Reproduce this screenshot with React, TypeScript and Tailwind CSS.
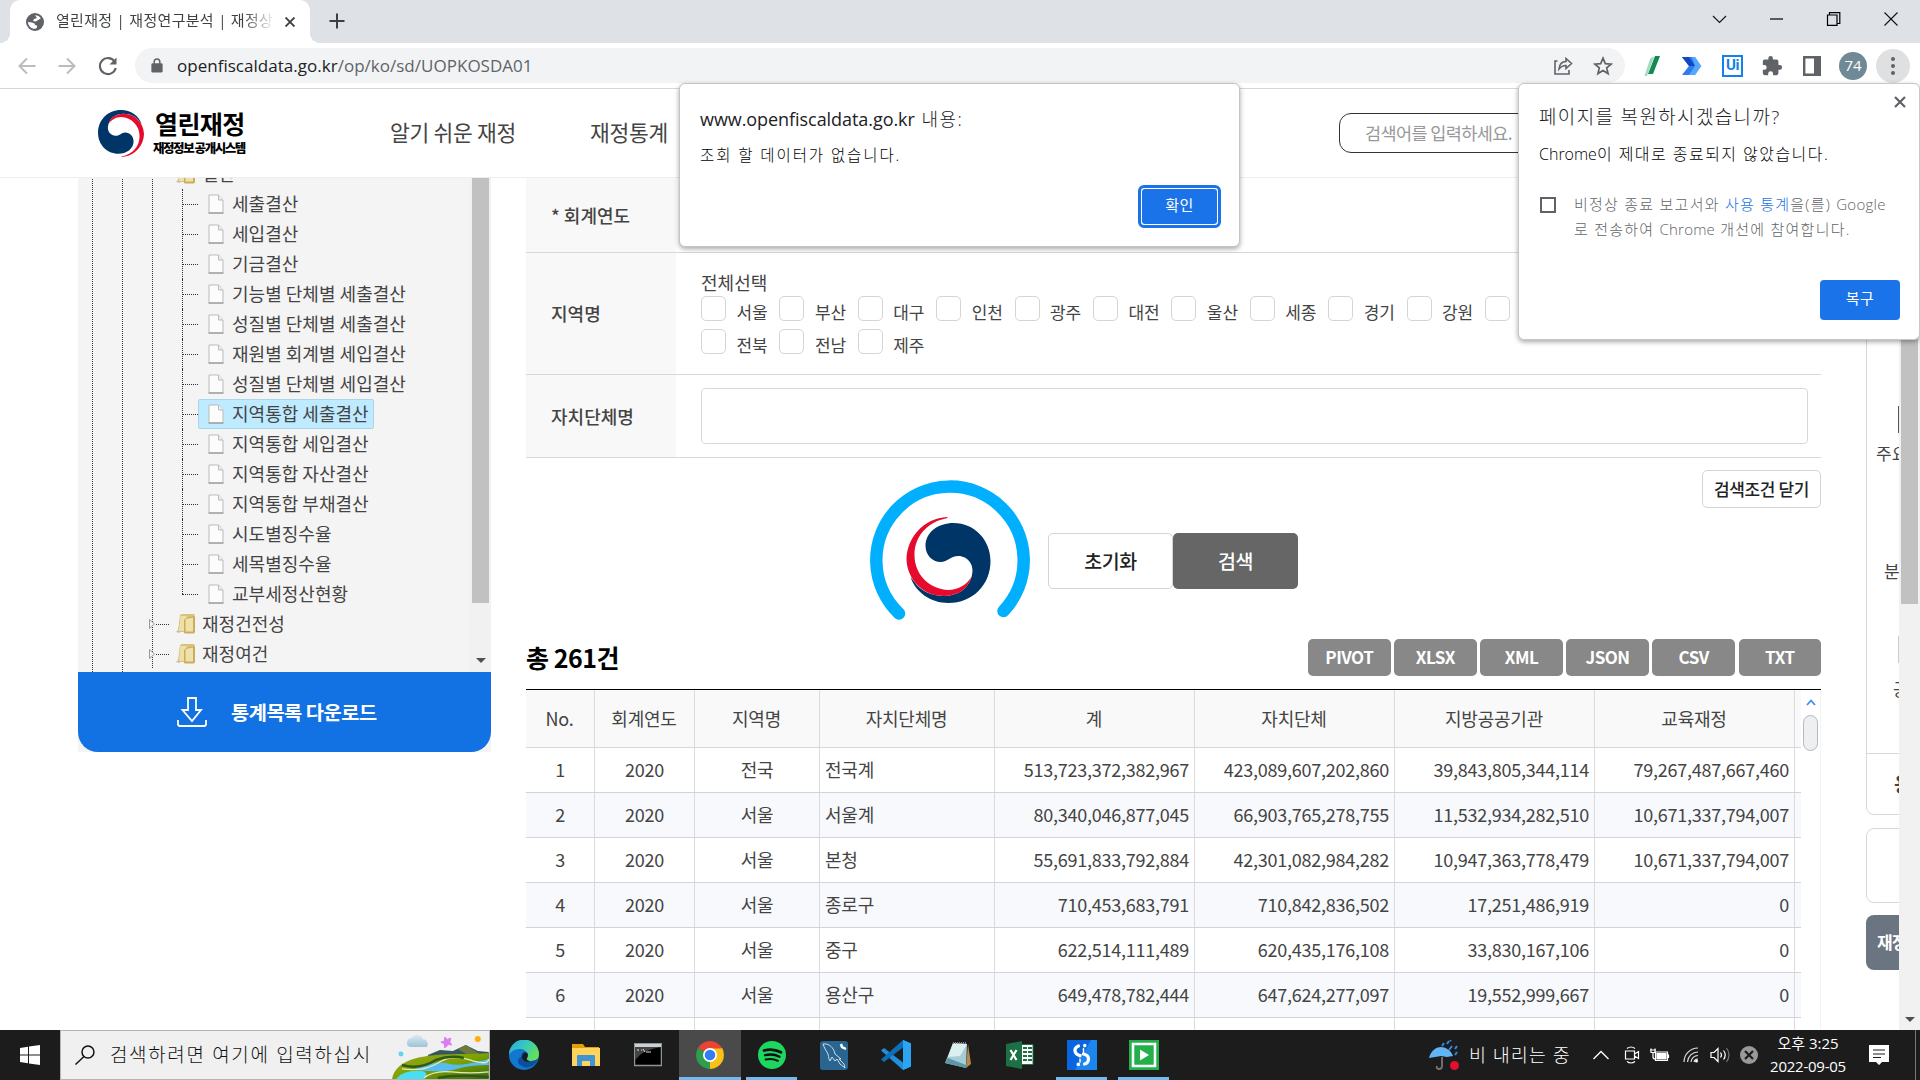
import React from "react";

const UI = "font-['Open_Sans','Noto_Sans_CJK_KR',sans-serif]";
const WEB = "font-['Noto_Sans_CJK_KR',sans-serif]";

function Emblem({ className }: { className: string }) {
  return (
    <svg viewBox="0 0 84 86" className={className}>
      <path fill="#003567" d="M19 29C19 15 32 6 47 6c21 0 37 17 37 38 0 24-18 42-42 42C24 86 9 75 4 60l4 5c6 9 18 14 29 14 15 0 25-8 28-19 4-12-4-21-13-21s-10 6-18 6-15-7-15-16Z" />
      <path fill="#e60a2d" d="M41 0C17 1 0 21 0 43c1 20 17 36 37 36 15 0 25-8 28-19-5 8-14 13-23 13C22 72 8 57 8 38 8 20 20 5 41 1Z" />
    </svg>
  );
}

function Globe() {
  return (
    <svg viewBox="0 0 18 18" className="h-[18px] w-[18px]">
      <circle cx="9" cy="9" r="9" fill="#5f6368" />
      <path fill="#fff" d="M9 2.200c2-.2 4.500 1 5.800 3.200L12 7 10 8.500 7 8l1-2 3-1zM2 9l4 .5 2.500 1L9 12l2 .5v2l-1.500 1.300C5 16 2.200 13 2 9Z" />
    </svg>
  );
}

function TabStrip() {
  return (
    <div className="flex h-[43px] items-stretch bg-[#dee1e6] pl-[10px]">
      <div className="relative flex w-[300px] items-center rounded-t-[10px] bg-white pl-4">
        <Globe />
        <div className="ml-3 w-[219px] overflow-hidden whitespace-nowrap bg-gradient-to-r from-[#3c4043] from-85% to-white bg-clip-text pb-[3px] text-[15px] tracking-[0.3px] text-transparent">
          열린재정 | 재정연구분석 | 재정상
        </div>
        <svg viewBox="0 0 10 10" className="ml-[10px] h-[10px] w-[10px]" stroke="#3c4043" strokeWidth="1.900"><path d="M.5.5l9 9M9.500.5l-9 9" /></svg>
        <span className="absolute -left-[10px] bottom-0 h-[10px] w-[10px] bg-[radial-gradient(circle_at_0_0,#dee1e6_10px,#fff_10px)]" />
        <span className="absolute -right-[10px] bottom-0 h-[10px] w-[10px] bg-[radial-gradient(circle_at_100%_0,#dee1e6_10px,#fff_10px)]" />
      </div>
      <svg viewBox="0 0 16 16" className="ml-[19px] mt-[13px] h-4 w-4" stroke="#3c4043" strokeWidth="2"><path d="M8 .5v15M.5 8h15" /></svg>
      <div className="ml-auto flex h-[37px] items-center">
        <svg viewBox="0 0 14 14" className="h-[14px] w-[57px]" fill="none" stroke="#111" strokeWidth="1.100"><path d="M.5 4L7 10.500 13.500 4" /></svg>
        <svg viewBox="0 0 14 14" className="h-[14px] w-[57px]" fill="none" stroke="#000" strokeWidth="1.200"><path d="M.5 7h13" /></svg>
        <svg viewBox="0 0 14 14" className="h-[14px] w-[57px]" fill="none" stroke="#000" strokeWidth="1.200"><path d="M1 3h9.500v10.400H1zM3 3V.7h10.300V11.500H10.500" /></svg>
        <svg viewBox="0 0 14 14" className="h-[14px] w-[58px]" fill="none" stroke="#111" strokeWidth="1.100"><path d="M.5.5l13 13M13.500.5l-13 13" /></svg>
      </div>
    </div>
  );
}

function Toolbar() {
  return (
    <div className="flex h-[46px] items-center border-b border-[#d4d6d9] bg-white pl-[17px] pr-[10px]">
      <svg viewBox="0 0 20 20" className="h-5 w-5" fill="none" stroke="#babcbe" strokeWidth="2"><path d="M18.500 10H3M10 2.500L2.500 10l7.500 7.500" /></svg>
      <svg viewBox="0 0 20 20" className="ml-5 h-5 w-5" fill="none" stroke="#babcbe" strokeWidth="2"><path d="M1.500 10H17M10 2.500l7.500 7.500-7.500 7.500" /></svg>
      <svg viewBox="0 0 20 20" className="ml-[21px] h-5 w-5" fill="none" stroke="#5f6368" strokeWidth="2.100"><path d="M16.500 5.500A8 8 0 1 0 17.700 12" /><path d="M18.500 1.500v7h-7z" fill="#5f6368" stroke="none" /></svg>
      <div className="ml-[17px] flex h-[35px] w-[1490px] items-center rounded-full bg-[#f1f3f4] pl-4 pr-3">
        <svg viewBox="0 0 12 16" className="h-[15px] w-3"><rect y="5.500" width="12" height="10" rx="1.500" fill="#5f6368" /><path d="M3 6V4a3 3 0 0 1 6 0v2" fill="none" stroke="#5f6368" strokeWidth="1.600" /></svg>
        <div className="ml-[14px] text-[17px] tracking-[0.02px] text-[#5f6368]"><span className="text-[#202124]">openfiscaldata.go.kr</span>/op/ko/sd/UOPKOSDA01</div>
        <svg viewBox="0 0 20 20" className="ml-auto h-5 w-5" fill="none" stroke="#5f6368" strokeWidth="1.600"><path d="M4.500 5H2v13h14v-4M6 13c.5-5 3-7.500 7-7.500V2.500l5.500 5-5.500 5V9.500C10 9.500 8 10.500 6 13Z" /></svg>
        <svg viewBox="0 0 20 20" className="ml-[20px] h-5 w-5" fill="none" stroke="#5f6368" strokeWidth="1.700"><path d="M10 2.200l2.300 5.400 5.900.5-4.500 3.800 1.400 5.700L10 14.500l-5.100 3.100 1.400-5.700L1.800 8.100l5.900-.5z" /></svg>
      </div>
      <svg viewBox="0 0 18 22" className="ml-[19px] h-[22px] w-[18px]"><path d="M11 1h5L9 19H4z" fill="#138a52" /><path d="M8 2h2L3 21H.5L6 4z" fill="#a6d9be" /></svg>
      <svg viewBox="0 0 20 20" className="ml-[20px] h-5 w-5"><path d="M0 1h13l6 9-6 9H0l7-9z" fill="#2f7bf0" /><path d="M0 1h7l6 9H7z" fill="#1247c4" /><path d="M13 1l6.500 9-6.500 9H7l6-9-3-9z" fill="#62b4ff" opacity=".8" /></svg>
      <div className="ml-[20px] flex h-[22px] w-[21px] items-center justify-center border-2 border-[#1281ea] font-['Roboto'] text-[15px] font-bold tracking-tight text-[#1281ea]">Ui</div>
      <svg viewBox="0 0 24 24" className="ml-[18px] h-[22px] w-[22px]" fill="#5f6368"><path d="M20.500 11H19V7a2 2 0 0 0-2-2h-4V3.500a2.500 2.500 0 0 0-5 0V5H4a2 2 0 0 0-2 2v3.800h1.500a2.700 2.700 0 0 1 0 5.400H2V20a2 2 0 0 0 2 2h3.800v-1.500a2.700 2.700 0 0 1 5.400 0V22H17a2 2 0 0 0 2-2v-4h1.500a2.500 2.500 0 0 0 0-5Z" /></svg>
      <svg viewBox="0 0 18 20" className="ml-[20px] h-5 w-[18px]"><path d="M1.200 1.200h15.600v17.600H1.200z" fill="#fff" stroke="#5f6368" strokeWidth="2.400" /><path d="M11 1h6v18h-6z" fill="#5f6368" /></svg>
      <div className="ml-[18px] flex h-7 w-7 items-center justify-center rounded-full bg-[#6f8a96] text-[15px] text-white">74</div>
      <div className="ml-auto flex h-[34px] w-[34px] flex-col items-center justify-center gap-[3px] rounded-full bg-[#dfe0e1]">
        <i className="h-1 w-1 rounded-full bg-[#5f6368]" /><i className="h-1 w-1 rounded-full bg-[#5f6368]" /><i className="h-1 w-1 rounded-full bg-[#5f6368]" />
      </div>
    </div>
  );
}

function SiteHeader() {
  return (
    <div className={`flex h-[89px] shrink-0 items-center border-b border-[#eee] bg-white pl-[97px] ${WEB}`}>
      <Emblem className="h-[47px] w-[48px] rotate-180" />
      <div className="ml-2 flex w-[96px] flex-col text-black">
        <div className="ml-[2px] whitespace-nowrap text-[25px] font-bold leading-[27px] tracking-[-0.6px]">열린재정</div>
        <div className="mt-[3px] whitespace-nowrap text-[12.500px] font-black leading-[16px] tracking-[-1.450px]">재정정보 공개시스템</div>
      </div>
      <div className="ml-[141px] w-[200px] pb-px text-[21.500px] tracking-[-0.3px] text-[#444]">알기 쉬운 재정</div>
      <div className="w-[749px] pb-px text-[21.500px] tracking-[-0.3px] text-[#444]">재정통계</div>
      <div className="flex h-10 w-[300px] items-center rounded-[12px] border border-[#333] pl-[25px] text-[17.500px] tracking-[-0.6px] text-[#999]">검색어를 입력하세요.</div>
    </div>
  );
}

function FileIcon() {
  return (
    <svg viewBox="0 0 16 20" className="h-5 w-4">
      <path d="M1 1h9.500L15 6v13H1z" fill="#fcfcfc" stroke="#bbb" />
      <path d="M10.500 1v5H15" fill="#eee" stroke="#bbb" /><path d="M.5 19h15" stroke="#888" />
    </svg>
  );
}

function FolderIcon() {
  return (
    <svg viewBox="0 0 20 20" className="h-5 w-5">
      <path d="M0 18l4-4v5z" fill="#999" opacity=".6" />
      <path d="M2 16L4 1l2-1h12l1 2v16H2.500z" fill="#d9c27c" /><path d="M4.500 2h6v15H3z" fill="#efe0a8" />
      <path d="M8 6l2-2 8-2 1 1v15l-1 1.500H9q-1 0-1-1z" fill="#c9ad5f" /><path d="M9.500 5L17 3.500v14H9.500z" fill="#f0e1aa" />
    </svg>
  );
}

const VLINE = "w-[30px] self-stretch bg-[linear-gradient(to_bottom,#333_50%,transparent_50%)] bg-[length:1px_2px] bg-repeat-y bg-left";

const leaves = ["세출결산", "세입결산", "기금결산", "기능별 단체별 세출결산", "성질별 단체별 세출결산", "재원별 회계별 세입결산", "성질별 단체별 세입결산", "지역통합 세출결산", "지역통합 세입결산", "지역통합 자산결산", "지역통합 부채결산", "시도별징수율", "세목별징수율", "교부세정산현황"];

function FolderRow({ name, open }: { name: string; open?: boolean }) {
  return (
    <div className="flex h-[30px] shrink-0 items-center pl-[14px]">
      <i className={VLINE} /><i className={VLINE} />
      <span className="flex w-[24px] items-center self-stretch bg-[linear-gradient(to_bottom,#333_50%,transparent_50%)] bg-[length:1px_2px] bg-left bg-repeat-y">
        {!open && <svg viewBox="0 0 20 10" className="-ml-[3px] h-[10px] w-5 shrink-0" fill="#f4f4f4" stroke="#999"><path d="M.5.500l5 4.500-5 4.500z" /><path d="M7 5.500h13" stroke="#333" strokeDasharray="1 1" /></svg>}
      </span>
      <FolderIcon />
      <span className="ml-[6px] pb-[2px]">{name}</span>
    </div>
  );
}

function Sidebar() {
  return (
    <div className={`ml-[78px] flex h-[574px] w-[413px] shrink-0 flex-col bg-[#f4f4f4] ${WEB}`}>
      <div className="flex h-[494px]">
        <div className="flex flex-1 flex-col overflow-hidden whitespace-nowrap text-[18px] tracking-[0.02px] text-[#444]">
          <div className="-mt-[19px] flex shrink-0 flex-col">
            <FolderRow name="결산" open />
            {leaves.map((t, i) => (
              <div key={t} className="flex h-[30px] items-center pl-[14px]">
                <i className={VLINE} /><i className={VLINE} /><i className={VLINE} />
                <span className="flex w-4 flex-col self-stretch">
                  <i className={i === 13 ? "h-[15px] border-l border-dotted border-[#333]" : "h-[30px] border-l border-dotted border-[#333]"} />
                  <i className={i === 13 ? "w-4 border-t border-dotted border-[#333]" : "-mt-[15px] w-4 border-t border-dotted border-[#333]"} />
                </span>
                <span className={i === 7 ? "flex h-[30px] items-center rounded-[2px] border border-[#a9d6e8] bg-[#beebff] pl-[9px] pr-1" : "flex h-[30px] items-center border border-transparent pl-[9px]"}>
                  <FileIcon /><span className="ml-2 pb-[2px]">{t}</span>
                </span>
              </div>
            ))}
            <FolderRow name="재정건전성" /><FolderRow name="재정여건" />
            <div className="flex h-[30px] shrink-0 pl-[14px]"><i className={VLINE} /><i className={VLINE} /></div>
          </div>
        </div>
        <div className="flex w-[21px] flex-col items-center justify-between bg-[#f1f1f1] pb-[9px]">
          <i className="h-[425px] w-[17px] bg-[#c1c1c1]" />
          <i className="h-0 w-0 border-x-[5px] border-t-[5px] border-x-transparent border-t-[#505050]" />
        </div>
      </div>
      <div className="flex h-20 items-center rounded-b-[20px] bg-[#1272e3] pl-[99px] text-white">
        <svg viewBox="0 0 30 30" className="h-[30px] w-[30px]" fill="none" stroke="#fff" strokeWidth="1.800"><path d="M11 1h8v12h5L15 24 5.500 13H11zM1 23v4q0 2 2 2h24q2 0 2-2v-4" /></svg>
        <div className="ml-6 text-[19.800px] font-bold tracking-[-0.5px]">통계목록 다운로드</div>
      </div>
    </div>
  );
}

function Region({ name }: { name: string }) {
  return (
    <div className="flex h-[33px] w-[78.400px] items-start">
      <i className="h-[25px] w-[25px] rounded-[5px] border border-[#d5d5d5] bg-white" />
      <span className="ml-[10.500px] mt-[3px] text-[17px] leading-[25px] tracking-[-0.1px]">{name}</span>
    </div>
  );
}

const LABEL = "flex w-[150px] shrink-0 items-center bg-[#f8f8f8] pl-[25px] font-medium tracking-[0.02px]";

function SearchForm() {
  return (
    <div className="flex flex-col whitespace-nowrap text-[18px] tracking-[0.02px] text-[#444]">
      <div className="flex h-[75px] border-b border-[#d8d8d8]"><div className={LABEL}>* 회계연도</div></div>
      <div className="flex h-[122px] border-b border-[#d8d8d8]">
        <div className={LABEL}>지역명</div>
        <div className="ml-[25px] pt-[16px]">
          <div className="mb-px h-[26px] leading-[26px]">전체선택</div>
          <div className="flex">{["서울", "부산", "대구", "인천", "광주", "대전", "울산", "세종", "경기", "강원", "충북", "충남"].map((r) => <Region key={r} name={r} />)}</div>
          <div className="flex">{["전북", "전남", "제주"].map((r) => <Region key={r} name={r} />)}</div>
        </div>
      </div>
      <div className="flex h-[83px] items-stretch border-b border-[#d8d8d8]">
        <div className={LABEL}>자치단체명</div>
        <div className="ml-[25px] mt-[13px] h-[56px] w-[1107px] rounded border border-[#d8d8d8]" />
      </div>
    </div>
  );
}

const columns = [
  { t: "No.", w: "w-[69px]", a: "justify-center" },
  { t: "회계연도", w: "w-[100px]", a: "justify-center" },
  { t: "지역명", w: "w-[125px]", a: "justify-center" },
  { t: "자치단체명", w: "w-[175px]", a: "justify-start pl-[5px]" },
  { t: "계", w: "w-[200px]", a: "justify-end pr-[5px]" },
  { t: "자치단체", w: "w-[200px]", a: "justify-end pr-[5px]" },
  { t: "지방공공기관", w: "w-[200px]", a: "justify-end pr-[5px]" },
  { t: "교육재정", w: "w-[200px]", a: "justify-end pr-[5px]" },
];
const rows = [
  ["1", "2020", "전국", "전국계", "513,723,372,382,967", "423,089,607,202,860", "39,843,805,344,114", "79,267,487,667,460"],
  ["2", "2020", "서울", "서울계", "80,340,046,877,045", "66,903,765,278,755", "11,532,934,282,510", "10,671,337,794,007"],
  ["3", "2020", "서울", "본청", "55,691,833,792,884", "42,301,082,984,282", "10,947,363,778,479", "10,671,337,794,007"],
  ["4", "2020", "서울", "종로구", "710,453,683,791", "710,842,836,502", "17,251,486,919", "0"],
  ["5", "2020", "서울", "중구", "622,514,111,489", "620,435,176,108", "33,830,167,106", "0"],
  ["6", "2020", "서울", "용산구", "649,478,782,444", "647,624,277,097", "19,552,999,667", "0"],
  ["", "", "", "", "", "", "", ""],
];

function Grid() {
  return (
    <div className="flex h-[341px] shrink-0 overflow-hidden border-t-[1.500px] border-black text-[18px] tracking-[-0.24px] text-[#444]">
      <div className="flex w-[1275px] shrink-0 flex-col">
        <div className="flex h-[58px] shrink-0 border-b border-[#d5d7da] bg-[#f9f9f9]">
          {columns.map((c) => <div key={c.t} className={`flex items-center justify-center border-r border-[#d9dbde] pb-px pr-px ${c.w}`}>{c.t}</div>)}
        </div>
        {rows.map((r, i) => (
          <div key={i} className={`flex h-[45px] shrink-0 border-b border-[#d0d3d8] ${i % 2 ? "bg-[#f7f9fc]" : "bg-white"}`}>
            {r.map((v, j) => <div key={j} className={`flex items-center border-r border-[#d9dbde] pb-[2px] ${columns[j].w} ${columns[j].a}`}>{v}</div>)}
          </div>
        ))}
      </div>
      <div className="flex w-5 flex-col items-center border-r border-[#f4f4f4] pt-[9px]">
        <svg viewBox="0 0 10 7" className="h-[7px] w-[10px]" fill="none" stroke="#3d8ef5" strokeWidth="1.800"><path d="M1 6l4-4.500L9 6" /></svg>
        <i className="mt-[9px] h-9 w-[15px] rounded-full border border-[#b4b7be] bg-[#eeeff1]" />
      </div>
    </div>
  );
}

function Content() {
  return (
    <div className={`ml-[35px] flex w-[1295px] shrink-0 flex-col ${WEB}`}>
      <SearchForm />
      <div className="mt-[12px] flex h-[38px] w-[119px] items-center justify-center self-end rounded-[5px] border border-[#d5d5d5] pb-px text-[17px] font-medium tracking-[-0.4px] text-[#222]">검색조건 닫기</div>
      <div className="-mt-7 ml-[344px] flex h-[143px] items-start">
        <div className="grid h-[160px] w-[160px] place-items-center">
          <svg viewBox="0 0 160 160" className="col-start-1 row-start-1 h-[160px] w-[160px]" fill="none" stroke="#00b0ff" strokeWidth="12.500" strokeLinecap="round"><path d="M29 133.500A73.700 73.700 0 1 1 133.500 131" /></svg>
          <Emblem className="col-start-1 row-start-1 mr-[3px] h-[86px] w-[85px]" />
        </div>
        <div className="ml-[18px] mt-[53px] flex text-[19.500px] font-medium tracking-[-0.4px]">
          <div className="flex h-[56px] w-[125px] items-center justify-center rounded-[5px] border border-[#d5d5d5] text-[#222]">초기화</div>
          <div className="flex h-[56px] w-[125px] items-center justify-center rounded-[5px] bg-[#666] text-white">검색</div>
        </div>
      </div>
      <div className="mt-[16px] flex h-[37px] items-center justify-between">
        <div className="pt-px text-[25px] font-bold tracking-[-0.5px] text-black">총 261건</div>
        <div className="flex gap-[3.600px] text-[17px] font-bold tracking-[-0.5px] text-white">
          {["PIVOT", "XLSX", "XML", "JSON", "CSV", "TXT"].map((b) => <div key={b} className="flex h-[37px] w-[82.500px] items-center justify-center rounded-[5px] bg-[#888] pb-[2px]">{b}</div>)}
        </div>
      </div>
      <div className="h-[13px] shrink-0" />
      <Grid />
    </div>
  );
}

function QuickPanel() {
  return (
    <div className={`ml-[45px] flex w-[33px] shrink-0 flex-col overflow-hidden whitespace-nowrap text-[17px] text-[#444] ${WEB}`}>
      <div className="flex h-[637px] w-[80px] shrink-0 flex-col rounded-b-lg border border-[#d8d8d8]">
        <div className="h-[575px] border-b border-[#d8d8d8]">
          <div className="ml-[31px] mt-[227px] h-[27px] w-1 bg-[#555]" />
          <div className="ml-[9px] mt-[7px] leading-[26px]">주요</div>
          <div className="ml-[17px] mt-[92px] leading-[26px]">분석</div>
          <div className="ml-[31px] mt-[52px] h-[27px] w-1 bg-[#ccc]" />
          <div className="ml-[26px] mt-[13px] leading-[26px]">공시</div>
        </div>
        <div className="ml-[27px] mt-[16px] h-[28px] text-[20px] font-bold leading-[28px]">용</div>
      </div>
      <div className="mt-[13px] h-[75px] w-[80px] shrink-0 rounded-lg border border-[#d8d8d8]" />
      <div className="mt-[12px] flex h-[55px] w-[80px] shrink-0 items-center rounded-lg bg-[#6b7581] pb-[2px] pl-[11px] font-bold tracking-[-1px] text-white">재정</div>
    </div>
  );
}

function AlertDialog() {
  return (
    <div className="absolute left-[679px] top-[83px] flex h-[164px] w-[561px] flex-col rounded-[6px] border border-[#c4c4c4] bg-white px-5 pt-[21px] text-[#202124] shadow-[0_2px_5px_rgba(0,0,0,0.35)]">
      <div className="text-[18px] leading-[28px] tracking-[-0.06px]">www.openfiscaldata.go.kr <span className="ml-[2px] font-light tracking-[1.500px]">내용:</span></div>
      <div className="mt-2 text-[15.500px] font-light leading-[28px] tracking-[1.900px] text-black">조회 할 데이터가 없습니다.</div>
      <div className="-mr-[2px] mt-[16px] flex h-[43px] w-[83px] items-center justify-center self-end rounded-[6px] border-[3px] border-[#1a73e8] bg-white p-px">
        <div className="flex h-full w-full items-center justify-center rounded-[3px] bg-[#1a73e8] pb-[2px] text-[15px] tracking-[0.5px] text-white">확인</div>
      </div>
    </div>
  );
}

function RestorePopup() {
  return (
    <div className="absolute left-[1518px] top-[83px] flex h-[257px] w-[402px] flex-col whitespace-nowrap rounded-[6px] border border-[#c8c8c8] bg-white pl-5 text-[#202124] shadow-[0_2px_5px_rgba(0,0,0,0.35)]">
      <svg viewBox="0 0 12 12" className="absolute right-[13px] top-[12px] h-3 w-3" stroke="#5f6368" strokeWidth="2.200"><path d="M1 1l10 10M11 1L1 11" /></svg>
      <div className="mt-[19px] text-[19px] font-light leading-[28px] tracking-[1.350px]">페이지를 복원하시겠습니까?</div>
      <div className="mt-[9px] text-[16px] font-light leading-[28px] tracking-[1.450px] text-black"><span className="tracking-normal">Chrome</span>이 제대로 종료되지 않았습니다.</div>
      <div className="mt-[24px] flex items-start">
        <i className="ml-px mt-[5px] h-4 w-4 border-2 border-[#5f6368]" />
        <div className="ml-[18px] text-[15px] font-light leading-[25px] tracking-[1.250px] text-[#5f6368]">
          비정상 종료 보고서와 <span className="text-[#1a73e8]">사용 통계</span>을(를) <span className="tracking-[0.3px]">Google</span><br />로 전송하여 <span className="tracking-[0.2px]">Chrome</span> 개선에 참여합니다.
        </div>
      </div>
      <div className="mr-[19px] mt-[38px] flex h-10 w-20 items-center justify-center self-end rounded bg-[#1a73e8] pb-[3px] text-[15px] tracking-[0.5px] text-white">복구</div>
    </div>
  );
}

function Slot({ children, active, open }: { children: React.ReactNode; active?: boolean; open?: boolean }) {
  return (
    <div className={`flex h-[50px] w-[62px] flex-col items-center justify-between ${active ? "bg-[#4a4a4a]" : ""}`}>
      <div className="flex h-[47px] items-center pt-[3px]">{children}</div>
      <i className={`h-[3px] ${active ? "w-full bg-[#76b9ed]" : open ? "w-[51px] bg-[#76b9ed]" : ""}`} />
    </div>
  );
}

function Landscape() {
  return (
    <svg viewBox="0 0 97 48" className="h-12 w-[97px]">
      <defs>
        <linearGradient id="hill" x2="1" y2="1"><stop stopColor="#9aa51c" /><stop offset=".5" stopColor="#7fa300" /><stop offset="1" stopColor="#3d6b10" /></linearGradient>
        <linearGradient id="sky" x2="0" y2="1"><stop stopColor="#dce9f2" /><stop offset="1" stopColor="#9fc3d6" /></linearGradient>
      </defs>
      <path d="M15 12a5 5 0 0 1 5-5 6 6 0 0 1 11 1 5 5 0 0 1 4 8H19q-4 0-4-4Z" fill="url(#sky)" />
      <path d="M53 6l2.500 2.500L59 7l-1 4 2 3-3.500-.5L53 17l-.5-4L49 11l3.500-1z" fill="#dd7cf5" stroke="#dd7cf5" strokeLinejoin="round" />
      <circle cx="86" cy="8" r="3" fill="#ffae0d" /><circle cx="9" cy="23" r="2.500" fill="#5fd5e8" />
      <path d="M36 24l12-5 13 1 13-6 12 6 11 1v20H36z" fill="#34565e" /><path d="M66 18l8-4 14 9-12 1z" fill="#6d7a3d" />
      <path d="M0 48C4 30 24 26 44 24c20-2 38 0 53-2v26z" fill="url(#hill)" />
      <path d="M26 35q22-5 32-2t39-5v6q-20 0-32 4-15 4-41 1z" fill="#56bdf0" /><path d="M4 48q7-9 26-8 8 2 2 8z" fill="#48dff5" />
      <path d="M10 38q22 3 36-6t32-3 19-1M32 47q10-8 28-6t37 0" fill="none" stroke="#e7e7c4" strokeWidth="1.300" />
      <path d="M10 34q18 5 34-5 14-5 28-2M46 47q18-4 51-1" fill="none" stroke="#2f5a14" strokeWidth="2.500" />
    </svg>
  );
}

function Taskbar() {
  return (
    <div className="flex h-[50px] shrink-0 items-stretch bg-[#1c1c1c] text-white">
      <div className="flex w-[60px] items-center justify-center"><svg viewBox="0 0 20 20" className="h-5 w-5" fill="#fff"><path d="M0 3l8-1.200v7.700H0zM9 1.600L20 0v9.500H9zM0 10.500h8v7.700L0 17zM9 10.500h11V20L9 18.400z" /></svg></div>
      <div className="flex w-[430px] items-center border border-[#b5b5b5] bg-[#f0f0f0] pl-[14px]">
        <svg viewBox="0 0 20 20" className="h-5 w-5" fill="none" stroke="#111" strokeWidth="1.500"><circle cx="13" cy="7" r="6" /><path d="M9 11.500L.5 19.500" /></svg>
        <div className="ml-[15px] w-[283px] whitespace-nowrap text-[19px] font-light tracking-[1.650px] text-[#111]">검색하려면 여기에 입력하십시</div>
        <Landscape />
      </div>
      <div className="flex pl-[2.500px]">
        <Slot><svg viewBox="0 0 30 30" className="h-[30px] w-[30px]"><defs><linearGradient id="eg" x2="1" y2=".6"><stop stopColor="#2aa6dc" /><stop offset=".5" stopColor="#36c9c0" /><stop offset="1" stopColor="#66e05a" /></linearGradient></defs><circle cx="15" cy="15" r="15" fill="#1277cf" /><path d="M0 15A15 15 0 0 1 30 14c0 5-4 7-8 7-3 0-5-1-4-3 2-5-2-9-7-9C6 9 2 11 0 15Z" fill="url(#eg)" /><path d="M12 17c0-4 3-6 5-5 3 1 2 4 1 6-1 1 1 3 4 3 3 0 5-1 7-2-3 8-12 11-18 6-3-2-3-6 1-8Z" fill="#0d4f9e" /><path d="M15 13c3-1 5 2 3 5-1 1 0 3 3 3-4 2-8-1-8-4 0-2 1-3 2-4Z" fill="#1c1c1c" /></svg></Slot>
        <Slot><svg viewBox="0 0 28 24" className="h-6 w-7"><path d="M0 1h11l2 3h14v8H0z" fill="#e0a106" /><path d="M0 5h28v18H0z" fill="#ffd35c" /><path d="M5 23V13q0-1 1-1h16q1 0 1 1v10h-5v-5h-8v5z" fill="#3f94d6" /></svg></Slot>
        <Slot><svg viewBox="0 0 28 24" className="h-6 w-7"><rect x=".5" y=".5" width="27" height="22" fill="#000" stroke="#8c9499" strokeWidth="1.500" /><path d="M1 1h26v3H1z" fill="#c9d1d4" /><path d="M1 4h26Q8 7 1 17z" fill="#444" /><path d="M3 7h2M7 7h1M9 6l2 3M12 9h5" stroke="#ddd" /></svg></Slot>
        <Slot active><svg viewBox="0 0 28 28" className="h-7 w-7"><path d="M14 14L1.900 7A14 14 0 0 1 26.100 7z" fill="#ea4335" /><path d="M14 14L26.100 7A14 14 0 0 1 14 28z" fill="#fbc116" /><path d="M14 14v14A14 14 0 0 1 1.900 7z" fill="#2f9d4e" /><path d="M14 7.500h12.400L14 28l5.500-10.500z" fill="#fbc116" /><path d="M1.900 7L8.500 18l5 3-.5 7z" fill="#2f9d4e" /><circle cx="14" cy="14" r="7" fill="#fff" /><circle cx="14" cy="14" r="5.300" fill="#327ef0" /></svg></Slot>
        <Slot open><svg viewBox="0 0 28 28" className="h-7 w-7" fill="none" stroke="#111" strokeLinecap="round"><circle cx="14" cy="14" r="14" fill="#1ed760" stroke="none" /><path d="M6 9.500q9-2.500 17 1.800" strokeWidth="2.800" /><path d="M7 14.200q8-2 14.500 1.600" strokeWidth="2.300" /><path d="M7.500 18.500q7-1.500 12.500 1.300" strokeWidth="1.900" /></svg></Slot>
        <Slot><svg viewBox="0 0 28 29" className="h-[29px] w-7" fill="none" stroke="#c9e0ec"><rect width="28" height="29" rx="3" fill="#2a6590" stroke="none" /><path d="M3 3c6-1 11 4 12 10l6 5-2 0 5 5 1 4-5-4-3-5-2 2-3-4-2 4c-2-3-1-6-3-9S4 6 3 3Z" /><path d="M21 3l1 3 4 2" strokeWidth="2.500" stroke="#fff" /></svg></Slot>
        <Slot><svg viewBox="0 0 30 30" className="h-[30px] w-[30px]"><path d="M22 0l8 3.500v23L22 30 0 10.500 3 8l19 14.500z" fill="#1f8fdd" /><path d="M22 0v7.500L3 22 0 19.500z" fill="#0c6fb8" /><path d="M22 0l8 3.500v23L22 30z" fill="#2ba5f2" /></svg></Slot>
        <Slot><svg viewBox="0 0 28 28" className="h-7 w-7"><path d="M24 3l3 20-5 4z" fill="#b58b4d" /><path d="M9 2l14 1-1 24L1 22z" fill="#a5cdd5" /><path d="M9 2l14 1-7 12L4 16z" fill="#dceff1" /><path d="M1 22l3-5 18 7v3z" fill="#5d98a5" /><path d="M9 2h14" stroke="#888" strokeWidth="2" strokeDasharray="1 1" /></svg></Slot>
        <Slot><svg viewBox="0 0 28 28" className="h-7 w-7"><path d="M14 3.500h13v20H14z" fill="#fff" stroke="#1d7044" /><path d="M17 7h4M17 11h4M17 15h4M17 19h4M22 7h4M22 11h4M22 15h4M22 19h4" stroke="#1d7044" strokeWidth="2" /><path d="M0 3l16-3v28L0 25z" fill="#1d7044" /><path d="M4.500 9l6 10M10.500 9l-6 10" stroke="#fff" strokeWidth="2.200" /></svg></Slot>
        <Slot open><svg viewBox="0 0 30 30" className="h-[30px] w-[30px]" fill="none" stroke="#fff" strokeWidth="3.200" strokeLinecap="round"><path d="M0 0h30v30H0z" fill="#1a86ee" stroke="none" /><path d="M0 0h24L8 30H0z" fill="#0a66de" stroke="none" /><path d="M11.500 6Q7.500 7.500 8 11T13 15.500V16M16.500 13.500V14Q21.500 15 21.500 19T17.500 24" /><path d="M13 19v3M16.500 8.500v3" strokeWidth="1.500" /><path d="M17.800 5.500v.1M11.300 24.300v.1" strokeWidth="3.600" /></svg></Slot>
        <Slot open><svg viewBox="0 0 30 30" className="h-[30px] w-[30px]"><path d="M0 0h30v30H0z" fill="#23b04b" /><path d="M4 4h22v22H4z" fill="none" stroke="#fff" strokeWidth="2.600" /><path d="M11 9.500l9 5.500-9 5.500z" fill="#fff" /></svg></Slot>
      </div>
      <div className="ml-auto flex items-center">
        <svg viewBox="0 0 30 30" className="h-[30px] w-[30px]"><path d="M13 17v9q0 3-3 3t-2-3" fill="none" stroke="#777" strokeWidth="1.800" /><path d="M0 18C2 10 8 7 12 7s10 3 12 9l-6 1-6-1-6 1z" fill="#62b5f5" /><path d="M15 3l-2 3M20 1l-2 3M23 6l-3 4M28 6l-2 3M28 12l-2 3M21 1l1-1" stroke="#2f8ae0" strokeWidth="2" /><circle cx="25.500" cy="25.500" r="4.500" fill="#e0102f" /></svg>
        <div className="ml-[10px] w-[106px] whitespace-nowrap text-[18.500px] font-light tracking-[1px]">비 내리는 중</div>
        <svg viewBox="0 0 16 10" className="ml-[18px] h-[10px] w-4" fill="none" stroke="#fff" strokeWidth="1.300"><path d="M.5 9L8 1.500 15.500 9" /></svg>
        <svg viewBox="0 0 16 18" className="ml-[15px] h-[18px] w-4" fill="none" stroke="#fff" strokeWidth="1.200"><path d="M1.500 5h9v8h-9zM10.500 8l4-2.500v7l-4-2.500M3 2.500q4-3 8 0M3 15.500q4 3 8 0" /></svg>
        <svg viewBox="0 0 20 14" className="ml-[10px] h-[14px] w-5" fill="none" stroke="#fff" strokeWidth="1.200"><path d="M5.500 4h12v8.500h-12zM18.500 6.500v3.500" /><path d="M7 5.500h9V11H7z" fill="#fff" /><path d="M1 .5v4h4v-4M3 4.500V9q0 2 2.500 2M0 2h6" /></svg>
        <svg viewBox="0 0 16 16" className="ml-[13px] h-4 w-4" fill="none" strokeWidth="1.200" stroke="#ddd"><path d="M1 15A14 14 0 0 1 15 1M4.500 15A10.500 10.500 0 0 1 15 5M8 15a7 7 0 0 1 7-6.500M11 15a4 4 0 0 1 4-3" /><circle cx="13.500" cy="14" r="1.500" fill="#fff" stroke="none" /></svg>
        <svg viewBox="0 0 20 16" className="ml-[11px] h-4 w-5" fill="none" stroke="#fff" strokeWidth="1.200"><path d="M1 5.500h3L8 1.500v13l-4-4H1zM10.500 5.500q2 2.500 0 5M13.500 3.500q3.500 4.500 0 9" /><path d="M16.500 1q5 7 0 14" stroke="#777" /></svg>
        <svg viewBox="0 0 18 18" className="ml-[10px] h-[18px] w-[18px]"><circle cx="9" cy="9" r="9" fill="#999" /><path d="M5 5l8 8M13 5l-8 8" stroke="#1c1c1c" strokeWidth="2.200" /></svg>
        <div className="ml-[10px] flex w-[80px] flex-col items-center whitespace-nowrap text-[15px] leading-[23px]"><span>오후 3:25</span><span className="tracking-[-0.25px]">2022-09-05</span></div>
        <svg viewBox="0 0 20 20" className="ml-[21px] h-5 w-5"><path d="M0 0h20v17h-7l-3 3-3-3H0z" fill="#fff" /><path d="M4 5h12M4 9h12M4 12.500h8" stroke="#1c1c1c" strokeWidth="1.200" /></svg>
        <i className="ml-[26px] mr-1 h-[50px] w-px bg-[#777]" />
      </div>
    </div>
  );
}

export default function App() {
  return (
    <div className={`relative flex h-[1080px] w-[1920px] flex-col overflow-hidden bg-white ${UI}`}>
      <TabStrip />
      <Toolbar />
      <div className="flex h-[941px] shrink-0 overflow-hidden">
        <div className="flex w-[1899px] flex-col">
          <SiteHeader />
          <div className="flex h-[852px] items-start overflow-hidden">
            <Sidebar /><Content /><QuickPanel />
          </div>
        </div>
        <div className="flex w-[21px] flex-col items-center justify-between bg-[#f1f1f1] pb-2">
          <i className="mt-5 h-[495px] w-[17px] bg-[#c1c1c1]" />
          <i className="h-0 w-0 border-x-[5px] border-t-[5px] border-x-transparent border-t-[#505050]" />
        </div>
      </div>
      <Taskbar />
      <AlertDialog />
      <RestorePopup />
    </div>
  );
}
